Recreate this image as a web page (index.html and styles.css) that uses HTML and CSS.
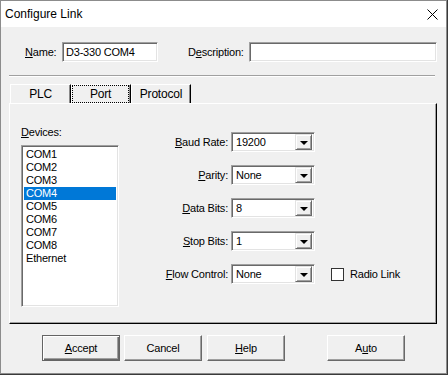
FILE: index.html
```html
<!DOCTYPE html>
<html lang="en">
<head>
    <meta charset="UTF-8">
    <meta name="viewport" content="width=device-width, initial-scale=1.0">
    <title>Configure Link</title>
    <link rel="stylesheet" href="styles.css">
</head>
<body>
    <div class="window">
        <div class="titlebar">
            <span class="title">Configure Link</span>
            <svg class="close" width="11" height="11" viewBox="0 0 11 11">
                <path d="M0.5 0.5 L10.5 10.5 M10.5 0.5 L0.5 10.5" stroke="#000" stroke-width="1" fill="none"/>
            </svg>
        </div>

        <div class="name-row">
            <label class="name-label"><u>N</u>ame:</label>
            <div class="field sunken name-input">D3-330 COM4</div>
            <label class="desc-label">D<u>e</u>scription:</label>
            <div class="field sunken desc-input"></div>
        </div>

        <div class="sep"></div>

        <div class="tabs">
            <div class="tab tab-plc">PLC</div>
            <div class="tab tab-port"><span class="focus">Port</span></div>
            <div class="tab tab-protocol">Protocol</div>
        </div>

        <div class="panel">
            <div class="devices">
                <div class="devices-label"><u>D</u>evices:</div>
                <ul class="listbox sunken">
                    <li>COM1</li>
                    <li>COM2</li>
                    <li>COM3</li>
                    <li class="selected">COM4</li>
                    <li>COM5</li>
                    <li>COM6</li>
                    <li>COM7</li>
                    <li>COM8</li>
                    <li>Ethernet</li>
                </ul>
            </div>

            <div class="settings">
                <div class="row">
                    <label class="row-label"><u>B</u>aud Rate:</label>
                    <div class="combo sunken"><span>19200</span><span class="drop raised"><i class="arrow"></i></span></div>
                </div>
                <div class="row">
                    <label class="row-label"><u>P</u>arity:</label>
                    <div class="combo sunken"><span>None</span><span class="drop raised"><i class="arrow"></i></span></div>
                </div>
                <div class="row">
                    <label class="row-label"><u>D</u>ata Bits:</label>
                    <div class="combo sunken"><span>8</span><span class="drop raised"><i class="arrow"></i></span></div>
                </div>
                <div class="row">
                    <label class="row-label"><u>S</u>top Bits:</label>
                    <div class="combo sunken"><span>1</span><span class="drop raised"><i class="arrow"></i></span></div>
                </div>
                <div class="row">
                    <label class="row-label"><u>F</u>low Control:</label>
                    <div class="combo sunken"><span>None</span><span class="drop raised"><i class="arrow"></i></span></div>
                    <span class="checkbox"></span>
                    <span class="check-label">Radio Link</span>
                </div>
            </div>
        </div>

        <div class="buttons">
            <div class="btn btn-default"><u>A</u>ccept</div>
            <div class="btn btn-cancel">Cancel</div>
            <div class="btn btn-help"><u>H</u>elp</div>
            <div class="btn btn-auto">A<u>u</u>to</div>
        </div>
    </div>
</body>
</html>
```

FILE: styles.css
```css
body {
    margin: 0;
    background-color: #3a3a3a;
    font-family: "Liberation Sans", Arial, sans-serif;
    font-size: 11px;
    letter-spacing: -0.2px;
    color: #000;
}
u {
    text-decoration: underline;
    text-underline-offset: 1px;
}
.window {
    width: 445px;
    height: 372px;
    border: 1px solid #8c8c8c;
    background-color: #f0f0f0;
}
.titlebar {
    height: 26px;
    background: #fff;
    display: flex;
    align-items: center;
    justify-content: space-between;
    padding: 0 8px 0 4px;
}
.title {
    font-size: 12px;
    letter-spacing: 0;
}

/* bevels */
.sunken {
    box-sizing: border-box;
    border: 1px solid;
    border-color: #a0a0a0 #fff #fff #a0a0a0;
    box-shadow: inset 1px 1px 0 #696969, inset -1px -1px 0 #e3e3e3;
    background: #fff;
}
.raised {
    box-sizing: border-box;
    border: 1px solid;
    border-color: #e3e3e3 #696969 #696969 #e3e3e3;
    box-shadow: inset 1px 1px 0 #fff, inset -1px -1px 0 #a0a0a0;
    background: #f0f0f0;
}

/* name row */
.name-row {
    display: flex;
    align-items: center;
    height: 20px;
    margin-top: 15px;
    padding-left: 24px;
}
.name-label {
    width: 37px;
}
.field {
    height: 20px;
    line-height: 18px;
    padding-left: 3px;
}
.name-input {
    width: 96px;
}
.desc-label {
    width: 61px;
    margin-left: 30px;
}
.desc-input {
    width: 188px;
}
.sep {
    margin: 13px 11px 0 8px;
    border-top: 1px solid #a0a0a0;
    border-bottom: 1px solid #fff;
}

/* tabs */
.tabs {
    display: flex;
    margin: 7px 0 0 9px;
    height: 19px;
}
.tab {
    box-sizing: border-box;
    height: 19px;
    border-top: 1px solid #fff;
    border-left: 1px solid #fff;
    border-right: 1px solid #000;
    box-shadow: inset -1px 0 0 #8a8a8a;
    font-size: 12px;
    display: flex;
    align-items: center;
    justify-content: center;
}
.tab-plc {
    width: 61px;
}
.tab-port {
    width: 60px;
    padding: 0 1px 0 0;
}
.tab-protocol {
    width: 60px;
}
.focus {
    box-sizing: border-box;
    width: 57px;
    height: 18px;
    border: 1px dotted #000;
    display: flex;
    align-items: center;
    justify-content: center;
}

/* panel */
.panel {
    box-sizing: border-box;
    display: flex;
    width: 428px;
    height: 221px;
    margin-left: 8px;
    border-top: 1px solid #fff;
    border-left: 1px solid #fff;
    border-right: 1px solid #000;
    border-bottom: 1px solid #000;
    box-shadow: inset -1px -1px 0 #a0a0a0;
}
.devices {
    padding: 22px 0 0 11px;
}
.devices-label {
    height: 13px;
    line-height: 13px;
    margin-bottom: 6px;
}
.listbox {
    list-style: none;
    margin: 0;
    padding: 2px;
    width: 98px;
    height: 162px;
}
.listbox li {
    height: 13px;
    line-height: 13px;
    padding-left: 2px;
}
.listbox li.selected {
    background-color: #0078d7;
    color: #fff;
}
.settings {
    margin-left: 31px;
    padding-top: 28px;
    display: flex;
    flex-direction: column;
    gap: 13px;
}
.row {
    display: flex;
    align-items: center;
    height: 20px;
}
.row-label {
    width: 78px;
    margin-right: 3px;
    text-align: right;
}
.combo {
    width: 84px;
    height: 20px;
    display: flex;
    align-items: center;
    justify-content: space-between;
    padding: 2px 2px 2px 4px;
}
.drop {
    width: 17px;
    height: 16px;
    display: flex;
    align-items: center;
    justify-content: center;
}
.arrow {
    width: 0;
    height: 0;
    border-left: 4px solid transparent;
    border-right: 4px solid transparent;
    border-top: 4px solid #000;
    margin-top: 1px;
}
.checkbox {
    box-sizing: border-box;
    width: 13px;
    height: 13px;
    margin-left: 16px;
    border: 1px solid #333;
    background: #fff;
}
.check-label {
    margin-left: 6px;
}

/* buttons */
.buttons {
    display: flex;
    margin-top: 11px;
    padding-left: 41px;
}
.btn {
    box-sizing: border-box;
    width: 78px;
    height: 26px;
    display: flex;
    align-items: center;
    justify-content: center;
    border: 1px solid;
    border-color: #fff #696969 #696969 #fff;
    box-shadow: inset -1px -1px 0 #a0a0a0;
    background: #f0f0f0;
}
.btn-default {
    border-color: #646464;
    box-shadow: inset 1px 1px 0 #fff, inset -1px -1px 0 #696969, inset -2px -2px 0 #a0a0a0;
}
.btn-cancel {
    margin-left: 4px;
}
.btn-help {
    margin-left: 5px;
}
.btn-auto {
    margin-left: 42px;
}
```
